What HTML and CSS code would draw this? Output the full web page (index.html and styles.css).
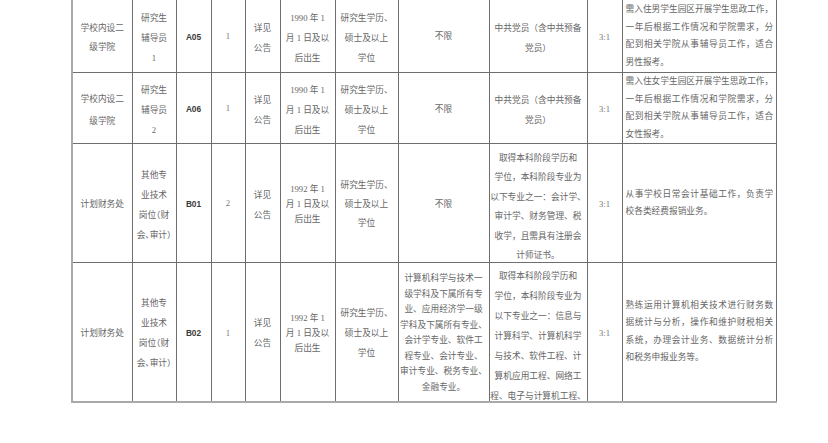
FILE: index.html
```html
<!DOCTYPE html>
<html lang="zh-CN">
<head>
<meta charset="utf-8">
<title>岗位表</title>
<link rel="stylesheet" href="styles.css">
</head>
<body>
<table class="jobs">
  <colgroup>
    <col class="w61"><col class="w44"><col class="w35"><col class="w34"><col class="w35"><col class="w55"><col class="w63"><col class="w91"><col class="w98"><col class="w35"><col class="w153">
  </colgroup>
  <tr class="r1">
    <td>学校内设二<br>级学院</td>
    <td class="lh20">研究生<br>辅导员<br>1</td>
    <td class="code">A05</td>
    <td class="num up">1</td>
    <td class="lh20">详见<br>公告</td>
    <td class="lh20">1990 年 1<br>月 1 日及以<br>后出生</td>
    <td class="lh20">研究生学历、<br>硕士及以上<br>学位</td>
    <td class="up">不限</td>
    <td class="lh20">中共党员（含中共预备<br>党员）</td>
    <td class="num">3:1</td>
    <td class="desc"><div class="j">需入住男学生园区开展学生思政工作，</div><div class="j">一年后根据工作情况和学院需求，分</div><div class="j">配到相关学院从事辅导员工作，适合</div><div>男性报考。</div></td>
  </tr>
  <tr class="r2">
    <td class="lh22">学校内设二<br>级学院</td>
    <td class="lh20">研究生<br>辅导员<br>2</td>
    <td class="code">A06</td>
    <td class="num up">1</td>
    <td class="lh20">详见<br>公告</td>
    <td class="lh20">1990 年 1<br>月 1 日及以<br>后出生</td>
    <td class="lh20">研究生学历、<br>硕士及以上<br>学位</td>
    <td>不限</td>
    <td class="lh20">中共党员（含中共预备<br>党员）</td>
    <td class="num">3:1</td>
    <td class="desc"><div class="j">需入住女学生园区开展学生思政工作，</div><div class="j">一年后根据工作情况和学院需求，分</div><div class="j">配到相关学院从事辅导员工作，适合</div><div>女性报考。</div></td>
  </tr>
  <tr class="r3">
    <td>计划财务处</td>
    <td class="lh20">其他专<br>业技术<br>岗位<span class="h">（</span>财<br>会<span class="h">、</span>审计<span class="h">）</span></td>
    <td class="code">B01</td>
    <td class="num up">2</td>
    <td class="lh20">详见<br>公告</td>
    <td class="lh15">1992 年 1<br>月 1 日及以<br>后出生</td>
    <td class="lh19">研究生学历、<br>硕士及以上<br>学位</td>
    <td>不限</td>
    <td><div class="box3">取得本科阶段学历和<br>学位，本科阶段专业为<br>以下专业之一：会计学、<br>审计学、财务管理、税<br>收学，且需具有注册会<br>计师证书。</div></td>
    <td class="num">3:1</td>
    <td class="desc"><div class="j">从事学校日常会计基础工作，负责学</div><div>校各类经费报销业务。</div></td>
  </tr>
  <tr class="r4">
    <td>计划财务处</td>
    <td class="lh20">其他专<br>业技术<br>岗位<span class="h">（</span>财<br>会<span class="h">、</span>审计<span class="h">）</span></td>
    <td class="code">B02</td>
    <td class="num">1</td>
    <td class="lh20">详见<br>公告</td>
    <td class="lh15">1992 年 1<br>月 1 日及以<br>后出生</td>
    <td class="lh20">研究生学历、<br>硕士及以上<br>学位</td>
    <td class="lh155">计算机科学与技术一<br>级学科及下属所有专<br>业、应用经济学一级<br>学科及下属所有专业、<br>会计学专业、软件工<br>程专业、会计专业、<br>审计专业、税务专业、<br>金融专业。</td>
    <td class="top"><div class="box4">取得本科阶段学历和<br>学位，本科阶段专业为<br>以下专业之一：信息与<br>计算科学、计算机科学<br>与技术、软件工程、计<br>算机应用工程、网络工<br>程、电子与计算机工程、</div></td>
    <td class="num">3:1</td>
    <td class="desc"><div class="j">熟练运用计算机相关技术进行财务数</div><div class="j">据统计与分析，操作和维护财税相关</div><div class="j">系统，办理会计业务、数据统计分析</div><div>和税务申报业务等。</div></td>
  </tr>
</table>
</body>
</html>
```

FILE: styles.css
```css
html, body {
  margin: 0;
  padding: 0;
  background: #ffffff;
}

.jobs {
  border-collapse: collapse;
  table-layout: fixed;
  margin: -1px 0 0 71px;
  font-family: "Liberation Serif", "Noto Sans CJK SC", serif;
  font-size: 8.7px;
  line-height: 19px;
  color: #666666;
}

.w61 { width: 60px; }
.w44 { width: 44px; }
.w35 { width: 35px; }
.w34 { width: 34px; }
.w55 { width: 55px; }
.w63 { width: 63px; }
.w91 { width: 91px; }
.w98 { width: 98px; }
.w153 { width: 151px; }

.r1 { height: 73px; }
.r2 { height: 71px; }
.r3 { height: 119px; }
.r4 { height: 139px; }

.jobs td {
  border: 1px solid #6e6e6e;
  padding: 3px 0 0;
  text-align: center;
  vertical-align: middle;
  white-space: nowrap;
  overflow: visible;
}

.jobs td:first-child {
  border-left: 2px solid #a9a9a9;
}

.r4 td {
  border-bottom: 2px solid #a9a9a9;
}

.lh15 { line-height: 15px; }
.lh155 { line-height: 15.5px; }
.lh19 { line-height: 19px; }
.lh20 { line-height: 20px; }
.lh22 { line-height: 22px; }

.code {
  font-family: "Liberation Sans", Arial, sans-serif;
  font-weight: bold;
  font-size: 8.3px;
  color: #3a3a3a;
}

.num {
  color: #777777;
}

.jobs td.up {
  padding-top: 0;
}

.h {
  font-feature-settings: "halt";
}

.jobs td.desc {
  text-align: left;
  line-height: 17.5px;
  padding: 0;
}

.desc div {
  margin: 0 3px 0 3px;
}

.j {
  text-align: justify;
  text-align-last: justify;
}

.box3 {
  height: 112px;
  line-height: 19.6px;
}

.jobs td.top {
  vertical-align: top;
  padding: 3px 0 0;
  line-height: 20px;
}

.box4 {
  height: 134px;
  overflow: hidden;
}
```
